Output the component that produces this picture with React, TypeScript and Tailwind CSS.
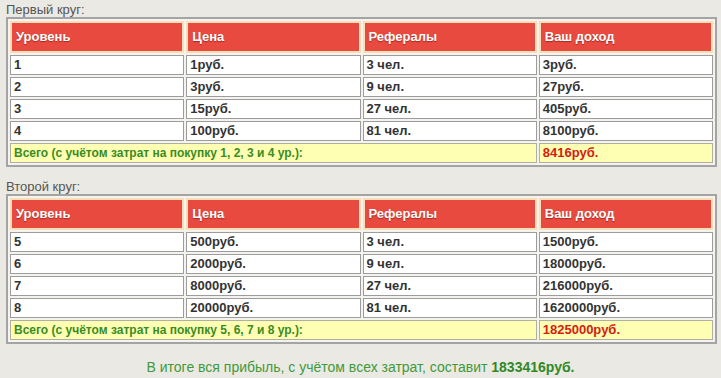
const rounds = [
  {
    title: "Первый круг:",
    rows: [
      ["1", "1руб.", "3 чел.", "3руб."],
      ["2", "3руб.", "9 чел.", "27руб."],
      ["3", "15руб.", "27 чел.", "405руб."],
      ["4", "100руб.", "81 чел.", "8100руб."],
    ],
    totalLabel: "Всего (с учётом затрат на покупку 1, 2, 3 и 4 ур.):",
    total: "8416руб.",
  },
  {
    title: "Второй круг:",
    rows: [
      ["5", "500руб.", "3 чел.", "1500руб."],
      ["6", "2000руб.", "9 чел.", "18000руб."],
      ["7", "8000руб.", "27 чел.", "216000руб."],
      ["8", "20000руб.", "81 чел.", "1620000руб."],
    ],
    totalLabel: "Всего (с учётом затрат на покупку 5, 6, 7 и 8 ур.):",
    total: "1825000руб.",
  },
];

const heads = ["Уровень", "Цена", "Рефералы", "Ваш доход"];

function RoundTable({ round }: { round: (typeof rounds)[number] }) {
  return (
    <div>
      <div className="pl-[6px] text-[13px] leading-[15px] text-[#555]">{round.title}</div>
      <table className="ml-[6px] w-[711px] table-fixed border-separate border-spacing-[2px] border-2 border-[#a4a4a4] bg-[#f4f3ef]">
        <thead>
          <tr>
            {heads.map((h) => (
              <th
                key={h}
                className="h-[32px] border-2 border-[#f8dfb8] bg-[#e84a3f] px-[4px] py-0 text-left text-[13px] font-bold text-white [text-shadow:0_1px_1px_rgba(120,20,10,0.6)]"
              >
                {h}
              </th>
            ))}
          </tr>
        </thead>
        <tbody>
          {round.rows.map((r) => (
            <tr key={r[0]}>
              {r.map((c, i) => (
                <td
                  key={i}
                  className="h-[20px] border border-[#9c9c9c] bg-white px-[3px] py-0 text-[13px] font-bold leading-[18px] text-[#333]"
                >
                  {c}
                </td>
              ))}
            </tr>
          ))}
          <tr>
            <td
              colSpan={3}
              className="h-[20px] border border-[#b0b0a0] bg-[#ffffb3] px-[3px] py-0 text-[12px] font-bold leading-[18px] text-[#3a8c22]"
            >
              {round.totalLabel}
            </td>
            <td className="h-[20px] border border-[#b0b0a0] bg-[#ffffb3] px-[3px] py-0 text-[13px] font-bold leading-[18px] text-[#d42010]">
              {round.total}
            </td>
          </tr>
        </tbody>
      </table>
    </div>
  );
}

export default function App() {
  return (
    <div className="h-[378px] w-[721px] bg-[#ebe9e4] font-['Liberation_Sans',Arial,sans-serif]">
      <div className="h-[2px]" />
      <RoundTable round={rounds[0]} />
      <div className="h-[12px]" />
      <RoundTable round={rounds[1]} />
      <p className="mt-[15px] text-center text-[14px] leading-[16px] text-[#3f9a3a]">
        В итоге вся прибыль, с учётом всех затрат, составит <b className="text-[#2f8a26]">1833416руб.</b>
      </p>
    </div>
  );
}
